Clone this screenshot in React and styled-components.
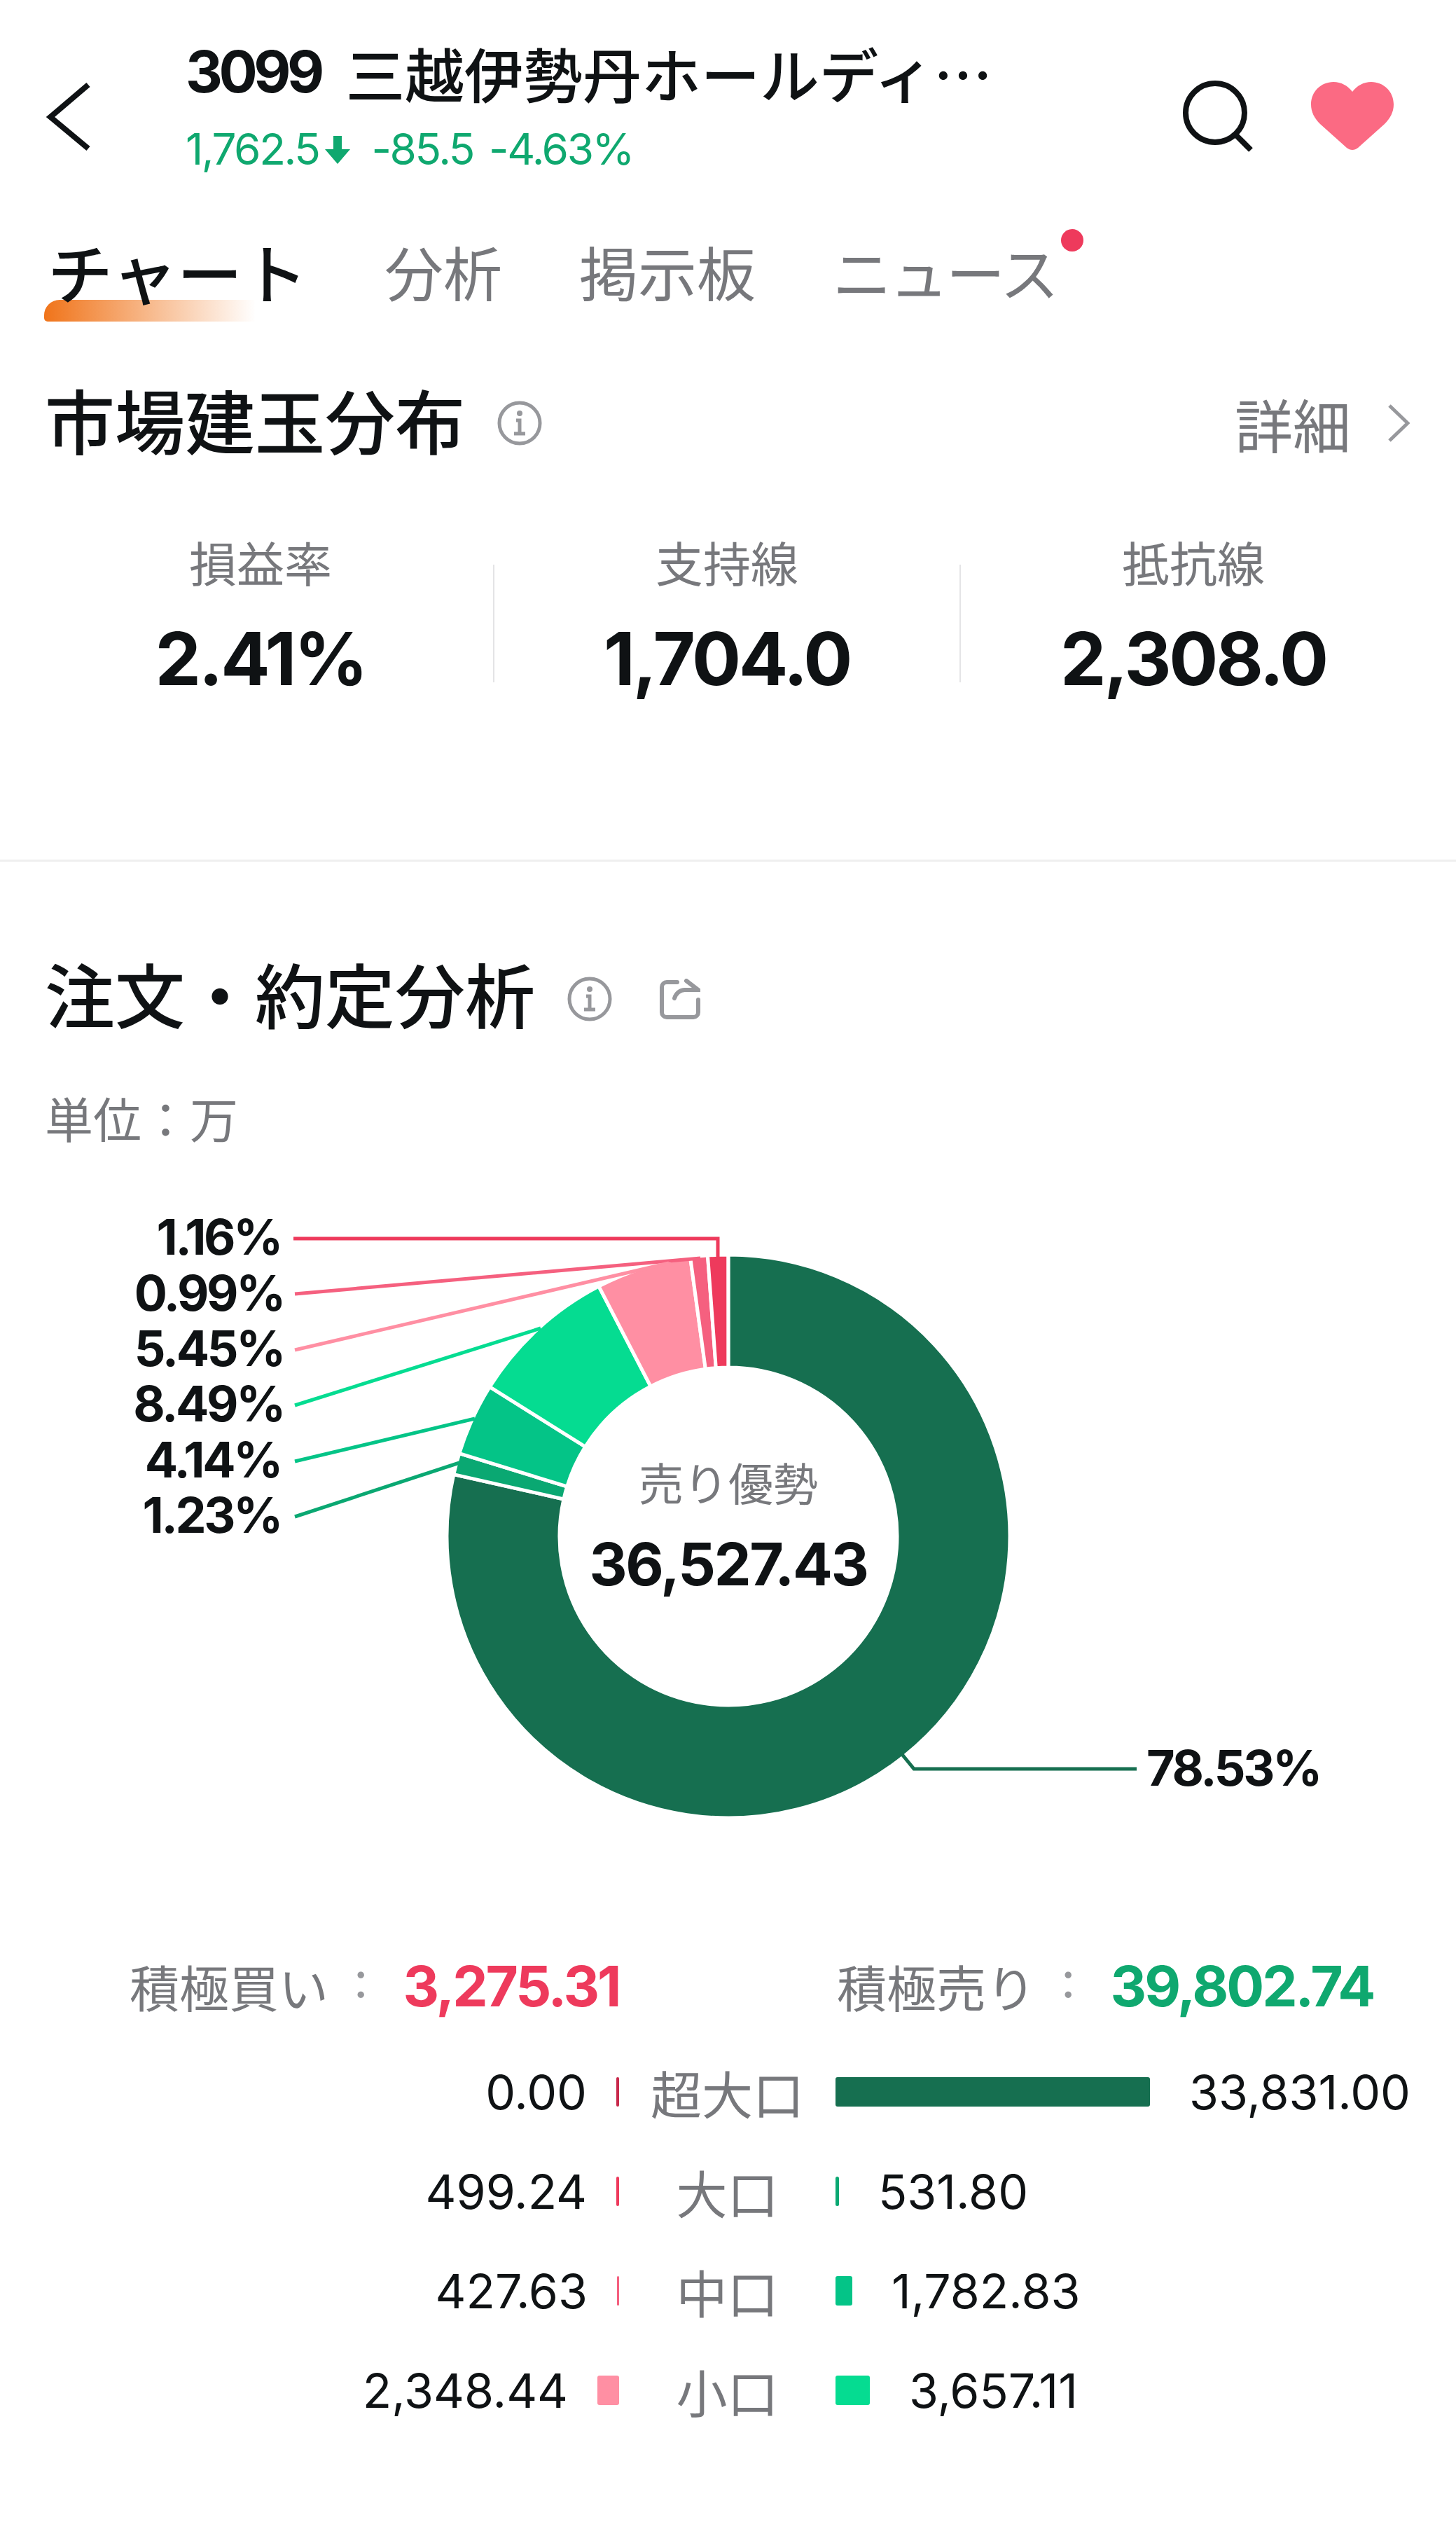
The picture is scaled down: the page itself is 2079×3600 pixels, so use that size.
import React from "react";
import styled, { createGlobalStyle } from "styled-components";

const CJK = `"Noto Sans CJK JP", "Noto Sans JP", sans-serif`;
const LATIN = `Inter, "Noto Sans CJK JP", sans-serif`;
const INK = "#0f1214";
const GRAY = "#77787c";
const RED = "#ee3a5c";
const GREEN = "#0fa86f";

const Global = createGlobalStyle`
  html, body { margin: 0; padding: 0; background: #fff; }
  body { font-family: ${CJK}; color: ${INK}; }
`;

const Page = styled.div`
  width: 2079px;
  height: 3600px;
  overflow: hidden;
  background: #fff;
`;

const Header = styled.header`
  display: flex;
  align-items: flex-start;
  height: 320px;
  box-sizing: border-box;
  padding: 53px 89px 0 64px;
`;
const BackIcon = styled.svg`
  width: 70px;
  height: 102px;
  margin-top: 64px;
  margin-right: 131px;
  flex: none;
`;
const TitleBlock = styled.div`
  display: flex;
  flex-direction: column;
  gap: 14px;
`;
const Title = styled.div`
  display: flex;
  align-items: center;
  gap: 36px;
  height: 100px;
  font-size: 84.5px;
  line-height: 100px;
  font-weight: 500;
  white-space: nowrap;
`;
const Code = styled.span`
  font-family: ${LATIN};
  font-weight: 700;
  font-size: 82px;
  letter-spacing: -5.5px;
`;
const Quote = styled.div`
  display: flex;
  align-items: center;
  height: 90px;
  font-family: ${LATIN};
  font-size: 62px;
  letter-spacing: -2.4px;
  color: ${GREEN};
  white-space: nowrap;
`;
const DownArrow = styled.svg`
  width: 36px;
  height: 40px;
  margin: 4px 30px 0 9px;
`;
const QuoteGap = styled.span`
  margin-left: 22px;
`;
const HeadIcons = styled.div`
  display: flex;
  align-items: center;
  gap: 82px;
  margin-left: auto;
  margin-top: 60px;
`;
const IconSvg = styled.svg`
  display: block;
  flex: none;
`;

const Tabs = styled.nav`
  display: flex;
  align-items: center;
  gap: 110px;
  height: 133px;
  padding: 0 0 12px 68px;
`;
const Tab = styled.div`
  position: relative;
  font-size: ${(p) => (p.$active ? "93px" : "84px")};
  font-weight: ${(p) => (p.$active ? 500 : 400)};
  line-height: 120px;
  letter-spacing: ${(p) => (p.$tight ? "-3px" : "0")};
  color: ${(p) => (p.$active ? INK : GRAY)};
  white-space: nowrap;
`;
const TabLine = styled.span`
  position: absolute;
  left: -5px;
  bottom: -12px;
  width: 302px;
  height: 31px;
  border-radius: 22px 0 0 5px;
  background: linear-gradient(90deg, #f0741a 0%, rgba(240, 116, 26, 0) 100%);
`;
const TabText = styled.span`
  position: relative;
`;
const Dot = styled.span`
  position: absolute;
  top: 0;
  right: -38px;
  width: 32px;
  height: 32px;
  border-radius: 50%;
  background: ${RED};
`;

const SectionHead = styled.div`
  display: flex;
  align-items: center;
  height: 130px;
  margin-top: ${(p) => p.$top}px;
  padding: 0 66px 0 64px;
`;
const SectionTitle = styled.h2`
  margin: ${(p) => p.$lift}px 0 0;
  font-size: 100px;
  line-height: 130px;
  font-weight: 500;
  white-space: nowrap;
`;
const Info = styled.svg`
  display: block;
  width: 64px;
  height: 64px;
  margin-left: ${(p) => p.$left}px;
  flex: none;
`;
const Share = styled.svg`
  display: block;
  width: 58px;
  height: 58px;
  margin-left: 68px;
  flex: none;
`;
const Detail = styled.div`
  display: flex;
  align-items: center;
  margin-left: auto;
  gap: 52px;
  font-size: 83px;
  color: ${GRAY};
`;

const Stats = styled.div`
  display: flex;
  padding: 93px 0 0 40px;
`;
const Stat = styled.div`
  display: flex;
  flex-direction: column;
  align-items: center;
  width: 664px;
`;
const StatLabel = styled.div`
  font-size: 68px;
  line-height: 80px;
  color: ${GRAY};
`;
const StatValue = styled.div`
  margin-top: 42px;
  font-family: ${LATIN};
  font-size: 104px;
  line-height: 112px;
  font-weight: 700;
  letter-spacing: -3.2px;
`;
const Divider = styled.div`
  width: 2px;
  height: 168px;
  margin-top: 44px;
  background: #e4e4e6;
`;
const Rule = styled.hr`
  margin: 231px 0 0;
  height: 3px;
  border: 0;
  background: #efefef;
`;
const Unit = styled.div`
  margin-top: 64px;
  padding-left: 64px;
  font-size: 69px;
  line-height: 80px;
  color: ${GRAY};
`;
const ChartSvg = styled.svg`
  display: block;
  width: 2079px;
  height: 940px;
  margin-top: 66px;
`;
const PctLabel = styled.text`
  font-family: ${LATIN};
  font-size: 70px;
  font-weight: 700;
  fill: ${INK};
  letter-spacing: -3.3px;
`;
const CenterCaption = styled.text`
  font-family: ${CJK};
  font-size: 64px;
  fill: ${GRAY};
`;
const CenterValue = styled.text`
  font-family: ${LATIN};
  font-size: 84px;
  font-weight: 700;
  letter-spacing: -2.3px;
  fill: ${INK};
`;

const Totals = styled.div`
  display: grid;
  grid-template-columns: 1010px auto;
  margin-top: 142px;
  padding-left: 185px;
  height: 100px;
  align-items: center;
`;
const Total = styled.div`
  display: flex;
  align-items: center;
  gap: 50px;
  white-space: nowrap;
`;
const TotalLabel = styled.span`
  display: flex;
  gap: 36px;
  font-size: 71px;
  color: ${GRAY};
`;
const TotalColon = styled.span`
  font-family: ${LATIN};
  color: #97989c;
`;
const TotalValue = styled.span`
  font-family: ${LATIN};
  font-size: 80px;
  font-weight: 700;
  letter-spacing: -3px;
  color: ${(p) => p.$color};
`;

const Flow = styled.div`
  margin-top: 32px;
`;
const FlowRow = styled.div`
  display: grid;
  grid-template-columns: 884px 309px 1fr;
  align-items: center;
  height: 142px;
`;
const FlowSide = styled.div`
  display: flex;
  align-items: center;
  justify-content: ${(p) => (p.$right ? "flex-start" : "flex-end")};
  gap: ${(p) => (p.$right ? 56 : 42)}px;
`;
const FlowBar = styled.span`
  display: block;
  width: ${(p) => p.$w}px;
  height: 42px;
  background: ${(p) => p.$color};
  border-radius: 3px;
`;
const FlowValue = styled.span`
  font-family: ${LATIN};
  font-size: 68px;
  line-height: 80px;
`;
const FlowLabel = styled.div`
  text-align: center;
  font-size: 73px;
  line-height: 80px;
  color: ${GRAY};
`;

const CX = 1040;
const CY = 2192;
const RO = 402;
const RI = 241;
const slices = [
  [78.53, "#166f50"],
  [1.23, "#0aa872"],
  [4.14, "#04c487"],
  [8.49, "#05dc91"],
  [5.45, "#ff8fa3"],
  [0.99, "#f5607f"],
  [1.16, "#ee3a5c"],
];
const pt = (r, a) => {
  const t = (a * Math.PI) / 180;
  return `${(CX + r * Math.sin(t)).toFixed(2)} ${(CY - r * Math.cos(t)).toFixed(2)}`;
};
const wedge = (from, to) => {
  const large = to - from > 180 ? 1 : 0;
  return `M${pt(RO, from)}A${RO} ${RO} 0 ${large} 1 ${pt(RO, to)}L${pt(RI, to)}A${RI} ${RI} 0 ${large} 0 ${pt(RI, from)}Z`;
};
let acc = 0;
const arcs = slices.map(([v, color]) => {
  const from = acc;
  acc += (v / 100) * 360;
  return { color, from, to: acc };
});

const leaders = [
  ["1.16%", "#ee3a5c", 1765, 401, "419,1767 1025,1767 1025,1794"],
  ["0.99%", "#f5607f", 1845, 405, "421,1846 1000,1795"],
  ["5.45%", "#ff8fa3", 1924, 405, "421,1926 955,1802"],
  ["8.49%", "#05dc91", 2003, 405, "421,2005 772,1895"],
  ["4.14%", "#04c487", 2083, 401, "421,2085 678,2024"],
  ["1.23%", "#0aa872", 2162, 401, "421,2164 656,2087"],
];

const flow = [
  ["0.00", 4, "#c8294b", "超大口", 449, "#166f50", "33,831.00"],
  ["499.24", 4, "#ee3a5c", "大口", 5, "#0aa872", "531.80"],
  ["427.63", 3, "#f5607f", "中口", 24, "#04c487", "1,782.83"],
  ["2,348.44", 31, "#ff8fa3", "小口", 49, "#05dc91", "3,657.11"],
];

const InfoIcon = ({ left }) => (
  <Info $left={left} viewBox="0 0 64 64" fill="none" stroke="#97989c">
    <circle cx="32" cy="32" r="29" strokeWidth="5" />
    <circle cx="32" cy="18" r="4" fill="#97989c" stroke="none" />
    <path d="M27 28h5v19M24 47h16" strokeWidth="5" />
  </Info>
);

export default function App() {
  return (
    <Page>
      <Global />
      <Header>
        <BackIcon viewBox="0 0 70 102" fill="none" stroke={INK} strokeWidth="8">
          <path d="M62 4 8 50l54 45" />
        </BackIcon>
        <TitleBlock>
          <Title>
            <Code>3099</Code>
            <span>三越伊勢丹ホールディ…</span>
          </Title>
          <Quote>
            1,762.5
            <DownArrow viewBox="0 0 36 40" fill={GREEN}>
              <path d="M12 0h12v19h12L18 40 0 19h12z" />
            </DownArrow>
            -85.5
            <QuoteGap>-4.63%</QuoteGap>
          </Quote>
        </TitleBlock>
        <HeadIcons>
          <IconSvg width="104" height="104" viewBox="0 -2 104 104" fill="none" stroke={INK} strokeWidth="8">
            <circle cx="49" cy="46" r="42" />
            <path d="m78 77 22 22" />
          </IconSvg>
          <IconSvg width="118" height="98" viewBox="0 0 118 98" fill="#fb6a83">
            <path d="M59 15C52 6 43 1 32 1 14 1 0 15 0 33c0 11 5 20 13 28l38 34c5 4 11 4 16 0l38-34c8-8 13-17 13-28C118 15 104 1 86 1 75 1 66 6 59 15z" />
          </IconSvg>
        </HeadIcons>
      </Header>

      <Tabs>
        <Tab $active>
          <TabLine />
          <TabText>チャート</TabText>
        </Tab>
        <Tab>分析</Tab>
        <Tab>掲示板</Tab>
        <Tab $tight>
          ニュース
          <Dot />
        </Tab>
      </Tabs>

      <SectionHead $top={74}>
        <SectionTitle $lift={-12}>市場建玉分布</SectionTitle>
        <InfoIcon left={46} />
        <Detail>
          詳細
          <IconSvg width="32" height="56" viewBox="0 0 32 56" fill="none" stroke="#97989c" strokeWidth="5">
            <path d="m3 3 26 25L3 53" />
          </IconSvg>
        </Detail>
      </SectionHead>

      <Stats>
        <Stat>
          <StatLabel>損益率</StatLabel>
          <StatValue>2.41%</StatValue>
        </Stat>
        <Divider />
        <Stat>
          <StatLabel>支持線</StatLabel>
          <StatValue>1,704.0</StatValue>
        </Stat>
        <Divider />
        <Stat>
          <StatLabel>抵抗線</StatLabel>
          <StatValue>2,308.0</StatValue>
        </Stat>
      </Stats>
      <Rule />

      <SectionHead $top={131}>
        <SectionTitle $lift={-18}>注文・約定分析</SectionTitle>
        <InfoIcon left={46} />
        <Share viewBox="0 0 58 58" fill="none" stroke="#97989c" strokeWidth="6" strokeLinecap="round">
          <path d="M25 5H10a7 7 0 0 0-7 7v36a7 7 0 0 0 7 7h38a7 7 0 0 0 7-7V30" />
          <path d="M38 3l17 13H36c-7 0-13 5-15 12" />
        </Share>
      </SectionHead>
      <Unit>単位：万</Unit>

      <ChartSvg viewBox="0 1700 2079 940">
        {arcs.map((a) => (
          <path key={a.color} d={wedge(a.from, a.to)} fill={a.color} stroke="#fff" strokeWidth="5" />
        ))}
        {leaders.map(([label, color, y, x, points]) => (
          <g key={label}>
            <polyline points={points} fill="none" stroke={color} strokeWidth="5" />
            <PctLabel x={x} y={y + 25} textAnchor="end">
              {label}
            </PctLabel>
          </g>
        ))}
        <polyline points="1287,2502 1305,2524 1623,2524" fill="none" stroke="#166f50" strokeWidth="5" />
        <PctLabel x="1637" y="2548">78.53%</PctLabel>
        <CenterCaption x={CX} y="2141" textAnchor="middle">売り優勢</CenterCaption>
        <CenterValue x={CX} y="2262" textAnchor="middle">36,527.43</CenterValue>
      </ChartSvg>

      <Totals>
        <Total>
          <TotalLabel>
            積極買い
            <TotalColon>:</TotalColon>
          </TotalLabel>
          <TotalValue $color={RED}>3,275.31</TotalValue>
        </Total>
        <Total>
          <TotalLabel>
            積極売り
            <TotalColon>:</TotalColon>
          </TotalLabel>
          <TotalValue $color={GREEN}>39,802.74</TotalValue>
        </Total>
      </Totals>

      <Flow>
        {flow.map(([lv, lw, lc, name, rw, rc, rv]) => (
          <FlowRow key={name}>
            <FlowSide>
              <FlowValue>{lv}</FlowValue>
              <FlowBar $w={lw} $color={lc} />
            </FlowSide>
            <FlowLabel>{name}</FlowLabel>
            <FlowSide $right>
              <FlowBar $w={rw} $color={rc} />
              <FlowValue>{rv}</FlowValue>
            </FlowSide>
          </FlowRow>
        ))}
      </Flow>
    </Page>
  );
}
